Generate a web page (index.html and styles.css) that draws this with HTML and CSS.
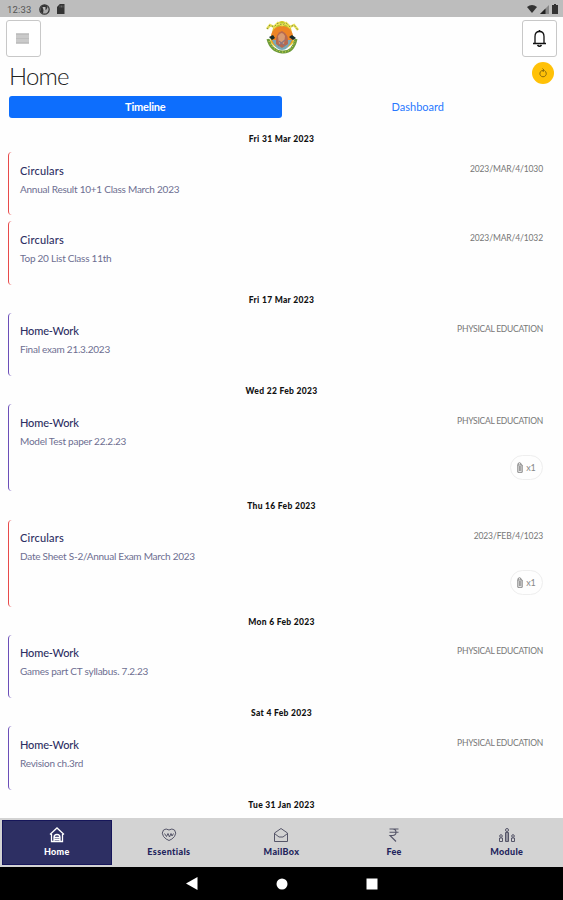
FILE: index.html
```
<!DOCTYPE html>
<html lang="en">
<head>
    <meta charset="UTF-8">
    <meta name="viewport" content="width=device-width, initial-scale=1.0">
    <title>Home</title>
    <link rel="stylesheet" href="styles.css">
</head>
<body>
    <!-- Device status bar -->
    <div class="status-bar">
        <span class="clock">12:33</span>
        <svg width="11" height="11" viewBox="0 0 11 11"><circle cx="5.5" cy="5.5" r="4.7" fill="#aaa" stroke="#333" stroke-width="1.2"/><path d="M5.5 1A4.5 4.5 0 0 0 4 9.500L4.500 6H7L8.500 3.500 7.500 1.500z" fill="#333"/><path d="M3.500 3h3v3h-2z" fill="#bdbdbd"/></svg>
        <svg width="8" height="10" viewBox="0 0 8 10"><path d="M2.800 0H7.500V10H0V3z" fill="#333"/><path d="M3 1.500v2M4.500 1.500v2M6 1.500v2" stroke="#888" stroke-width=".6"/></svg>
        <div class="signals">
            <svg width="10" height="8" viewBox="0 0 10 8"><path d="M0 2Q5-2 10 2L5 8z" fill="#333"/></svg>
            <svg width="9" height="9" viewBox="0 0 9 9"><path d="M0 9L9 0V9z" fill="#888"/><path d="M0 9L5.500 3.500V9z" fill="#222"/></svg>
            <svg width="6" height="10" viewBox="0 0 6 10"><path d="M0 1h2V0h2v1h2v9H0z" fill="#333"/></svg>
        </div>
    </div>

    <!-- Header -->
    <header class="header">
        <button class="icon-btn menu"><svg width="13" height="11" viewBox="0 0 13 11"><path d="M0 0h13v11H0z" fill="#cacaca"/><path d="M0 1.500h13M0 5.500h13M0 9.500h13" stroke="#bebebe"/></svg></button>
        <svg class="logo" width="34" height="36" viewBox="0 0 34 36">
            <path d="M8 9Q17-5 26 9L29 23Q17 37 5 23z" fill="#e8c22c"/>
            <path d="M11 8Q17-3 23 8z" fill="#b9c92e"/>
            <circle cx="17" cy="18" r="11" fill="#ee8425"/>
            <path d="M7 21H27Q23 31 17 31T7 21z" fill="#78a9b8"/>
            <path d="M11 25Q10 14 17 12Q24 15 23 25L17 29z" fill="#b76a50"/>
            <path d="M13 17q4-6 7 0l-1 8h-5z" fill="#d89b73"/>
            <path d="M14 22l6 5M20 21l-7 6" stroke="#8a7480" stroke-width="1.200"/>
            <path d="M3 20Q6 32 17 33T31 20" fill="none" stroke="#6d9b3a" stroke-width="3"/>
            <path d="M4 22Q8 32 17 33T30 22" fill="none" stroke="#f1e84c" stroke-dasharray="1 2"/>
            <path d="M2 10l3-4 4 2 4-4 4 2 4-2 4 4 4-2 4 5" fill="none" stroke="#e9df55" stroke-width="2.500"/>
            <path d="M2 10l3-4 4 2 4-4 4 2 4-2 4 4 4-2 4 5" fill="none" stroke="#6f8a48" stroke-dasharray="1.500 2"/>
            <path d="M4 18l4-2 2 3-3 2zM24 18l3-2 4 3-3 2z" fill="#172c2b"/>
        </svg>
        <button class="icon-btn"><svg width="15" height="19" viewBox="0 0 15 19" fill="none" stroke="#111"><path d="M3 14V7.500Q3 2.500 7.500 2.500T12 7.500V14M1 14.500H14" stroke-width="1.300"/><path d="M7.500 1v2M5.500 16q2 2.500 4 0" stroke-width="1.600"/></svg></button>
    </header>

    <div class="title-row">
        <h1 class="title">Home</h1>
        <button class="refresh"><svg width="10" height="10" viewBox="0 0 10 10" fill="none" stroke="#80620b" stroke-width=".9"><path d="M6.800 2.900A3.200 3.200 0 1 1 3.500 2.800L6 2.300M4.500 .5L6.200 2.300 4.800 4"/></svg></button>
    </div>

    <nav class="tabs">
        <a class="tab active">Timeline</a>
        <a class="tab">Dashboard</a>
    </nav>

    <!-- Timeline -->
    <main class="timeline">
        <h2 class="date">Fri 31 Mar 2023</h2>
        <article class="card circular">
            <div class="card-head"><h3>Circulars</h3><span class="ref">2023/MAR/4/1030</span></div>
            <p>Annual Result 10+1 Class March 2023</p>
        </article>
        <article class="card circular">
            <div class="card-head"><h3>Circulars</h3><span class="ref">2023/MAR/4/1032</span></div>
            <p>Top 20 List Class 11th</p>
        </article>

        <h2 class="date">Fri 17 Mar 2023</h2>
        <article class="card homework">
            <div class="card-head"><h3>Home-Work</h3><span class="ref subject">PHYSICAL EDUCATION</span></div>
            <p>Final exam 21.3.2023</p>
        </article>

        <h2 class="date">Wed 22 Feb 2023</h2>
        <article class="card homework tall">
            <div class="card-head"><h3>Home-Work</h3><span class="ref subject">PHYSICAL EDUCATION</span></div>
            <p>Model Test paper 22.2.23</p>
            <span class="files"><svg width="6" height="11" viewBox="0 0 6 11"><path d="M1 3V1.500Q2.500 0 4 1.500V3M.8 3h4.400v7.300H.8zM2.300 4v5M3.800 4v5" fill="none" stroke="#777" stroke-width=".9"/></svg>x1</span>
        </article>

        <h2 class="date">Thu 16 Feb 2023</h2>
        <article class="card circular tall">
            <div class="card-head"><h3>Circulars</h3><span class="ref">2023/FEB/4/1023</span></div>
            <p>Date Sheet S-2/Annual Exam March 2023</p>
            <span class="files"><svg width="6" height="11" viewBox="0 0 6 11"><path d="M1 3V1.500Q2.500 0 4 1.500V3M.8 3h4.400v7.300H.8zM2.300 4v5M3.800 4v5" fill="none" stroke="#777" stroke-width=".9"/></svg>x1</span>
        </article>

        <h2 class="date">Mon 6 Feb 2023</h2>
        <article class="card homework">
            <div class="card-head"><h3>Home-Work</h3><span class="ref subject">PHYSICAL EDUCATION</span></div>
            <p>Games part CT syllabus. 7.2.23</p>
        </article>

        <h2 class="date">Sat 4 Feb 2023</h2>
        <article class="card homework">
            <div class="card-head"><h3>Home-Work</h3><span class="ref subject">PHYSICAL EDUCATION</span></div>
            <p>Revision ch.3rd</p>
        </article>

        <h2 class="date">Tue 31 Jan 2023</h2>
    </main>

    <!-- Bottom navigation -->
    <nav class="bottom-nav">
        <a class="nav-item active">
            <svg width="16" height="16" viewBox="0 0 16 16" fill="none" stroke="currentColor" stroke-width="1.300"><path d="M1 7.500L8 1l7 6.500M2.500 7v7.500h11V7M5 14.500V10.500q0-3 3-3t3 3v4M5.500 10.500h5M5.500 12.500h5"/></svg>
            Home
        </a>
        <a class="nav-item">
            <svg width="16" height="16" viewBox="0 0 16 16" fill="none" stroke="currentColor"><path d="M8 3Q5 1 2.500 3Q0 6 2.500 9.500Q5 12.500 8 13.500Q11 12.500 13.500 9.500Q16 6 13.500 3Q11 1 8 3zM3.500 6.500l2 3 1.500-3 1.500 3.500 1.500-3.500 1 2.500 1.500-2.500"/></svg>
            Essentials
        </a>
        <a class="nav-item">
            <svg width="16" height="16" viewBox="0 0 16 16" fill="none" stroke="currentColor"><path d="M1.500 6L8 1.500 14.500 6v8.500h-13zM1.500 6.500L6 10h4l4.500-3.500"/></svg>
            MailBox
        </a>
        <a class="nav-item">
            <svg width="16" height="16" viewBox="0 0 16 16" fill="none" stroke="currentColor" stroke-width="1.100"><path d="M3.500 2h9M3.500 5.200h9M4 2h2.500q3.500 0 3.500 3.200T6.500 8.500H4l6 6"/></svg>
            Fee
        </a>
        <a class="nav-item">
            <svg width="18" height="16" viewBox="0 0 18 16" fill="none" stroke="currentColor"><circle cx="9" cy="3" r="1.500"/><path d="M7.500 14.500v-9h3v9zM9 6v8"/><circle cx="3" cy="9" r="1.300"/><path d="M1.500 14.500v-3.500h3v3.500z"/><circle cx="15" cy="9" r="1.300"/><path d="M13.500 14.500v-3.500h3v3.500z"/></svg>
            Module
        </a>
    </nav>

    <div class="system-nav">
        <svg width="12" height="13" viewBox="0 0 12 13"><path d="M0 6.500L11.500 0v13z" fill="#fff"/></svg>
        <svg width="12" height="12" viewBox="0 0 12 12"><circle cx="6" cy="6" r="5.500" fill="#fff"/></svg>
        <svg width="12" height="12" viewBox="0 0 12 12"><path d="M.5 .5h11v11H.5z" fill="#fff"/></svg>
    </div>
</body>
</html>
```
FILE: styles.css
```
* {
    box-sizing: border-box;
}
body {
    margin: 0;
    height: 900px;
    display: flex;
    flex-direction: column;
    overflow: hidden;
    background-color: #fefefe;
    font-family: Lato, sans-serif;
    color: #2d2f63;
}
h1, h2, h3, p {
    margin: 0;
}
button {
    padding: 0;
    display: flex;
    align-items: center;
    justify-content: center;
}
.status-bar {
    height: 17px;
    flex: none;
    display: flex;
    align-items: center;
    padding: 1px 5px 0 7px;
    background-color: #bdbdbd;
}
.clock {
    width: 32px;
    font-family: Roboto, sans-serif;
    font-size: 9.5px;
    letter-spacing: 0.2px;
    color: #555;
}
.status-bar > svg {
    margin-right: 7px;
}
.signals {
    display: flex;
    align-items: center;
    gap: 3px;
    margin-left: auto;
}
.header {
    height: 43px;
    flex: none;
    display: flex;
    align-items: flex-start;
    justify-content: space-between;
    padding: 3px 6px 0;
}
.icon-btn {
    width: 35px;
    height: 37px;
    background-color: #fff;
    border: 1px solid #c8c8c8;
    border-radius: 3px;
}
.menu {
    padding-right: 2px;
}
.logo {
    margin-top: -1px;
}
.title-row {
    height: 36px;
    flex: none;
    display: flex;
    justify-content: space-between;
    padding: 0 9px;
}
.title {
    font-size: 24px;
    line-height: 32px;
    font-weight: 300;
    letter-spacing: -0.8px;
    color: #222;
}
.refresh {
    width: 22px;
    height: 22px;
    margin-top: 2px;
    border: none;
    border-radius: 50%;
    background-color: #ffc107;
}
.tabs {
    height: 22px;
    flex: none;
    display: flex;
    padding: 0 9px;
}
.tab {
    flex: 1;
    border-radius: 3px;
    font-size: 11px;
    line-height: 21px;
    text-align: center;
    color: #2878ff;
}
.tab.active {
    background-color: #0d6efd;
    color: #fff;
    font-weight: bold;
    letter-spacing: -0.2px;
}
.timeline {
    flex: 1;
    min-height: 0;
    padding: 6px 8px 0;
    overflow: hidden;
}
.date {
    height: 28.2px;
    font-size: 8.5px;
    line-height: 30px;
    font-weight: 900;
    letter-spacing: 0.3px;
    text-align: center;
    color: #111;
}
.card {
    height: 63.3px;
    display: flex;
    flex-direction: column;
    padding: 9.5px 12px 0 11px;
    border-left: 1.5px solid;
    border-radius: 4px;
}
.card + .card {
    margin-top: 5.8px;
}
.circular {
    border-color: #e84a4a;
}
.homework {
    border-color: #6b4eb8;
}
.tall {
    height: 87.1px;
}
.card-head {
    height: 18px;
    display: flex;
    justify-content: space-between;
}
.card h3 {
    font-size: 11px;
    line-height: 18px;
    font-weight: 500;
}
.circular h3 {
    letter-spacing: 0.2px;
}
.homework h3 {
    letter-spacing: -0.15px;
}
.ref {
    font-size: 8.5px;
    line-height: 15px;
    letter-spacing: -0.12px;
    color: #777;
}
.subject {
    letter-spacing: -0.26px;
}
.card p {
    font-size: 10px;
    line-height: 18px;
    letter-spacing: -0.24px;
    color: #6d6e91;
}
.files {
    width: 33px;
    height: 25px;
    display: flex;
    align-items: center;
    justify-content: center;
    gap: 3px;
    align-self: flex-end;
    margin-top: 5px;
    border: 1px solid #eee;
    border-radius: 13px;
    font-size: 9px;
    color: #888;
}
.bottom-nav {
    height: 49px;
    flex: none;
    display: flex;
    padding: 2px 0;
    background-color: #d3d3d3;
}
.nav-item {
    width: 20%;
    display: flex;
    flex-direction: column;
    align-items: center;
    padding-top: 7px;
    font-size: 9px;
    line-height: 17px;
    font-weight: 900;
    letter-spacing: 0.35px;
    color: #22235c;
}
.nav-item svg {
    color: #555568;
}
.nav-item.active {
    width: calc(20% - 3px);
    margin: 0 1px 0 2px;
    border: 1px solid #16165a;
    padding-top: 6px;
    background-color: #2d2f63;
    color: #fff;
}
.nav-item.active svg {
    color: #fff;
}
.system-nav {
    height: 33px;
    flex: none;
    display: flex;
    align-items: center;
    justify-content: center;
    gap: 78px;
    background-color: #000;
}
```
